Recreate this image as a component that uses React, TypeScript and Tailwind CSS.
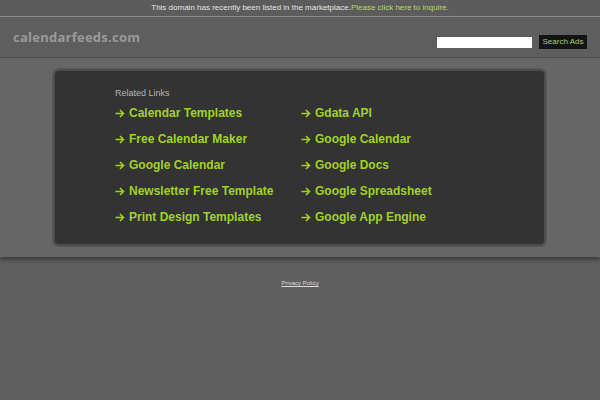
import React from 'react';

const leftLinks = ['Calendar Templates', 'Free Calendar Maker', 'Google Calendar', 'Newsletter Free Template', 'Print Design Templates'];
const rightLinks = ['Gdata API', 'Google Calendar', 'Google Docs', 'Google Spreadsheet', 'Google App Engine'];

const Arrow = () => (
  <svg width="10" height="9" viewBox="0 0 10 9" className="mr-[4px]">
    <path d="M0.5 4.5H8.5M5 1L8.5 4.5L5 8" fill="none" stroke="currentColor" strokeWidth="1.6" />
  </svg>
);

const LinkItem: React.FC<{ label: string }> = ({ label }) => (
  <a href="#" className="flex items-center h-[26px] text-[12px] font-bold text-[#a2d21e] leading-none">
    <Arrow />
    <span>{label}</span>
  </a>
);

const App: React.FC = () => {
  return (
    <div className="min-h-screen w-full bg-[#5f5f5f] font-['Liberation_Sans',Arial,sans-serif]">
      {/* Marketplace bar */}
      <div className="h-[17px] bg-[#5c5c5c] border-b border-[#8a8a8a] flex items-center justify-center text-[8px] text-[#e6e6e6]">
        <span>This domain has recently been listed in the marketplace.</span>
        <a href="#" className="text-[#b8d96a]">Please click here to inquire.</a>
      </div>

      {/* Header */}
      <div className="h-[41px] bg-[#5e5e5e] border-b border-[#525252] flex items-start justify-between pl-[13px] pr-[13px]">
        <div className="mt-[11px] text-[13px] font-bold text-[#9a9a9a] font-['Open_Sans',sans-serif] tracking-[0.25px]">
          calendarfeeds.com
        </div>
        <div className="flex items-center gap-[7px] mt-[18px]">
          <input type="text" className="w-[95px] h-[11px] bg-white outline-none border-0" />
          <button className="h-[14px] w-[48px] bg-[#141414] text-[8px] text-[#a8cf6a] leading-none">Search Ads</button>
        </div>
      </div>

      {/* Content band */}
      <div className="bg-[#666666] pt-[11px] pb-[11px] shadow-[0_3px_4px_rgba(0,0,0,0.35)]">
        <div className="ml-[53px] w-[493px] h-[177px] rounded-[6px] border-2 border-[#4c4c4c] bg-[#333333] shadow-[0_0_0_1px_#5a5a5a] pl-[60px] pt-[17px]">
          <div className="text-[9px] text-[#b4b4b4] leading-[10px] mb-[2px]">Related Links</div>
          <div className="flex">
            <div className="w-[186px]">
              {leftLinks.map(l => <LinkItem key={l} label={l} />)}
            </div>
            <div>
              {rightLinks.map(l => <LinkItem key={l} label={l} />)}
            </div>
          </div>
        </div>
      </div>

      {/* Footer */}
      <div className="flex justify-center pt-[22px]">
        <a href="#" className="text-[6px] text-[#dddddd] underline">Privacy Policy</a>
      </div>
    </div>
  );
};

export default App;
